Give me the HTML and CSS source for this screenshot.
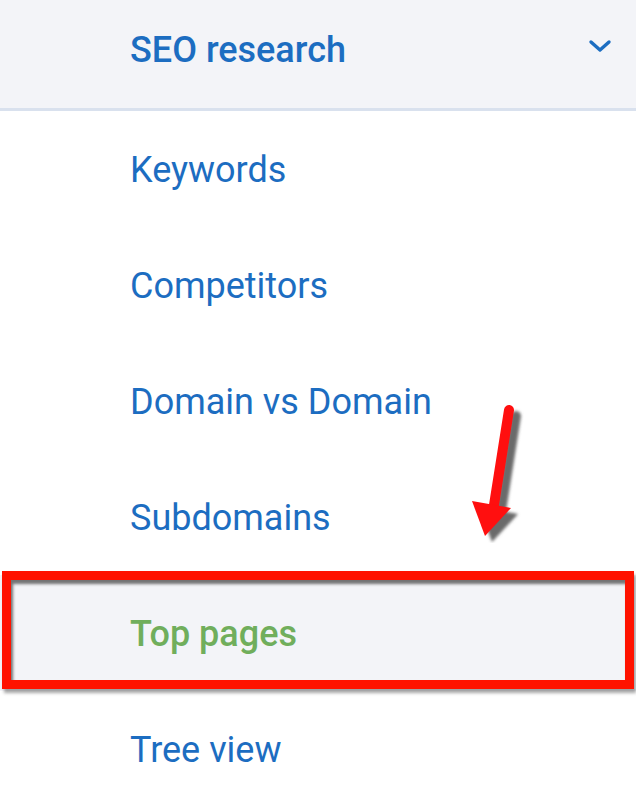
FILE: index.html
```html
<!DOCTYPE html>
<html lang="en">
  <head>
    <meta charset="UTF-8" />
    <meta name="viewport" content="width=device-width, initial-scale=1.0" />
    <title>SEO research</title>
    <link rel="stylesheet" href="styles.css">
  </head>
  <body>
    <div class="menu">
      <div class="menu-header">
        <span class="menu-title">SEO research</span>
        <svg class="chevron" width="24" height="16" viewBox="0 0 24 16">
          <path d="M3 4 L12 12 L21 4" fill="none" stroke="#1c6dc1" stroke-width="3.4" stroke-linecap="round" stroke-linejoin="round" />
        </svg>
      </div>
      <ul class="menu-list">
        <li class="menu-item">Keywords</li>
        <li class="menu-item">Competitors</li>
        <li class="menu-item">Domain vs Domain</li>
        <li class="menu-item">Subdomains</li>
        <li class="menu-item active">Top pages</li>
        <li class="menu-item">Tree view</li>
      </ul>

      <!-- annotation arrow -->
      <svg class="arrow" width="80" height="150" viewBox="0 0 80 150">
        <defs>
          <filter id="blur" x="-50%" y="-50%" width="200%" height="200%">
            <feGaussianBlur stdDeviation="1.5" />
          </filter>
        </defs>
        <g transform="translate(7 6)" fill="#6b6b6b" stroke="#6b6b6b" filter="url(#blur)">
          <line x1="49" y1="17" x2="34" y2="112" stroke-width="10" stroke-linecap="round" />
          <polygon points="12,108 51,115 25,143" stroke="none" />
        </g>
        <g fill="#ff0f0f" stroke="#ff0f0f">
          <line x1="49" y1="17" x2="34" y2="112" stroke-width="10" stroke-linecap="round" />
          <polygon points="12,108 51,115 25,143" stroke="none" />
        </g>
      </svg>
    </div>
  </body>
</html>
```

FILE: styles.css
```css
body {
  margin: 0;
  padding: 0;
  background-color: #fff;
  font-family: Roboto, "Liberation Sans", Arial, sans-serif;
}
.menu {
  position: relative;
  width: 636px;
  height: 802px;
  overflow: hidden;
}
.menu-header {
  display: flex;
  align-items: center;
  justify-content: space-between;
  height: 111px;
  padding: 0 24px 8px 130px;
  box-sizing: border-box;
  background-color: #f3f4f8;
  border-bottom: 3px solid #d9e1ee;
}
.menu-title {
  font-size: 36px;
  font-weight: 500;
  color: #1c6dc1;
}
.chevron {
  margin-top: -8px;
}
.menu-list {
  list-style: none;
  margin: 0;
  padding: 0;
}
.menu-item {
  display: flex;
  align-items: center;
  height: 116px;
  padding: 2px 0 0 130px;
  box-sizing: border-box;
  font-size: 36px;
  color: #1c6dc1;
}
.menu-item.active {
  position: relative;
  background-color: #f3f4f8;
  color: #70ae5c;
  font-weight: 500;
}
.menu-item.active::after {
  content: "";
  position: absolute;
  left: 2px;
  right: 2px;
  top: -4px;
  bottom: 2px;
  border: 9px solid #ff1200;
  box-shadow: inset 2px 4px 3px rgba(60, 60, 60, 0.7), 2px 4px 3px rgba(60, 60, 60, 0.45);
}
.arrow {
  position: absolute;
  left: 460px;
  top: 393px;
}
```
